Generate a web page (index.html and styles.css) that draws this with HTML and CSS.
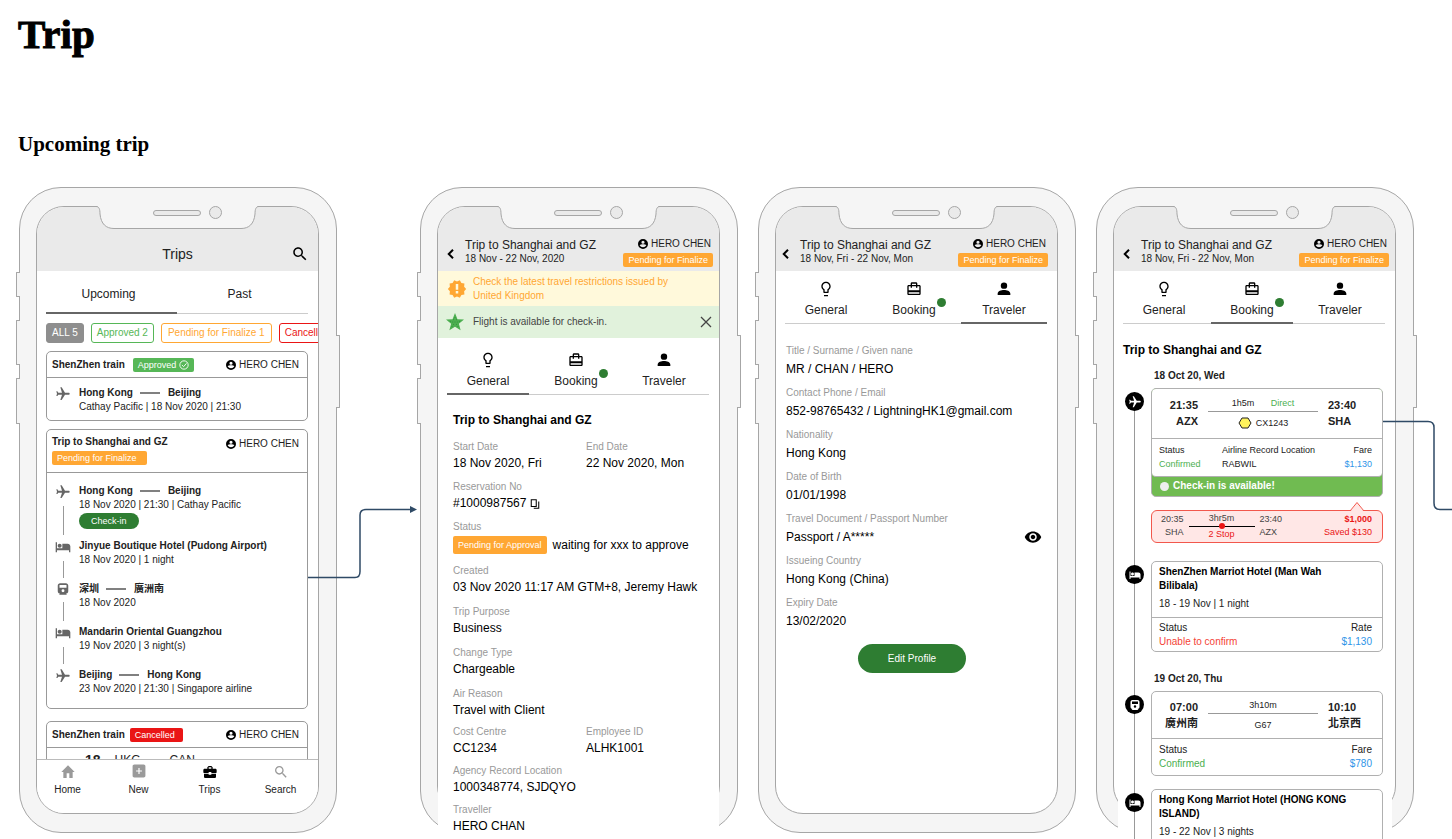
FILE: index.html
```html
<!DOCTYPE html>
<html lang="en">
<head>
<meta charset="utf-8">
<title>Trip – Upcoming trip</title>
<link rel="stylesheet" href="styles.css">
</head>
<body>
<svg class="sprite" aria-hidden="true">
  <symbol id="i-plane" viewBox="0 0 24 24"><path transform="rotate(90 12 12)" d="M21 16v-2l-8-5V3.500c0-.83-.67-1.500-1.500-1.500S10 2.670 10 3.500V9l-8 5v2l8-2.500V19l-2 1.500V22l3.500-1 3.500 1v-1.500L13 19v-5.500l8 2.500z"/></symbol>
  <symbol id="i-bed" viewBox="0 0 24 24"><path d="M7 13c1.660 0 3-1.340 3-3S8.660 7 7 7s-3 1.340-3 3 1.340 3 3 3zm12-6h-8v7H3V5H1v15h2v-3h18v3h2v-9c0-2.210-1.790-4-4-4z"/></symbol>
  <symbol id="i-train" viewBox="0 0 24 24"><path fill-rule="evenodd" d="M7 2h10c2.200 0 4 1.800 4 4v10c0 2.200-1.800 4-4 4l1.500 1.500V22h-13v-.5L7 20c-2.200 0-4-1.800-4-4V6c0-2.200 1.800-4 4-4zM6 5v5h12V5zm6 7.500a2.500 2.500 0 1 0 0 5 2.500 2.500 0 0 0 0-5z"/></symbol>
  <symbol id="i-search" viewBox="0 0 24 24"><path d="M15.500 14h-.79l-.28-.27C15.410 12.590 16 11.110 16 9.500 16 5.910 13.090 3 9.500 3S3 5.910 3 9.500 5.910 16 9.500 16c1.610 0 3.090-.59 4.230-1.570l.27.28v.79l5 4.990L20.490 19l-4.990-5zm-6 0C7.010 14 5 11.990 5 9.500S7.010 5 9.500 5 14 7.010 14 9.500 11.990 14 9.500 14z"/></symbol>
  <symbol id="i-home" viewBox="0 0 24 24"><path d="M10 21v-7h4v7h5v-9h3L12 2 2 12h3v9z"/></symbol>
  <symbol id="i-add" viewBox="0 0 24 24"><path d="M20 1H4C2.300 1 1 2.300 1 4v16c0 1.700 1.300 3 3 3h16c1.700 0 3-1.300 3-3V4c0-1.700-1.300-3-3-3zm-3 12h-4v4h-2v-4H7v-2h4V7h2v4h4v2z"/></symbol>
  <symbol id="i-case" viewBox="0 0 24 24"><path d="M10 16v-1H3.010L3 19c0 1.110.89 2 2 2h14c1.110 0 2-.89 2-2v-4h-7v1h-4zm10-9h-4.010V5l-2-2h-4l-2 2v2H4c-1.100 0-2 .9-2 2v3c0 1.110.89 2 2 2h6v-2h4v2h6c1.100 0 2-.9 2-2V9c0-1.100-.9-2-2-2zm-6 0h-4V5h4v2z"/></symbol>
  <symbol id="i-bulb" viewBox="0 0 24 24"><path d="M9 21h6v2H9zm3-20C8.140 1 5 4.140 5 8c0 2.380 1.190 4.470 3 5.740V17c0 .55.45 1 1 1h6c.55 0 1-.45 1-1v-3.260c1.810-1.270 3-3.360 3-5.740 0-3.860-3.140-7-7-7zm2.850 11.100l-.85.6V16h-4v-3.300l-.85-.6C7.800 11.160 7 9.630 7 8c0-2.760 2.240-5 5-5s5 2.240 5 5c0 1.630-.8 3.160-2.150 4.100z"/></symbol>
  <symbol id="i-luggage" viewBox="0 0 24 24"><path d="M20 6h-3V4c0-1.110-.89-2-2-2H9c-1.110 0-2 .89-2 2v2H4c-1.110 0-2 .89-2 2v11c0 1.110.89 2 2 2h16c1.110 0 2-.89 2-2V8c0-1.110-.89-2-2-2zM9 4h6v2H9V4zm11 15H4v-2h16v2zm0-5H4V8h3v2h2V8h6v2h2V8h3v6z"/></symbol>
  <symbol id="i-person" viewBox="0 0 24 24"><circle cx="12" cy="7" r="4.800"/><path d="M12 13.500c-4 0-9.500 1.700-9.500 5.200V21h19v-2.300c0-3.500-5.500-5.200-9.500-5.200z"/></symbol>
  <symbol id="i-account" viewBox="0 0 24 24"><path fill-rule="evenodd" d="M12 0a12 12 0 1 0 0 24 12 12 0 0 0 0-24zm0 4a3.800 3.800 0 1 1 0 7.600A3.800 3.800 0 0 1 12 4zM4 15c1-2 5-2.300 8-2.300s7 .3 8 2.300a9 9 0 0 1-8 5 9 9 0 0 1-8-5z"/></symbol>
  <symbol id="i-check" viewBox="0 0 24 24"><g fill="none" stroke="currentColor" stroke-width="2.200"><circle cx="12" cy="12" r="10"/><path d="M7 12l4 4 7-8"/></g></symbol>
  <symbol id="i-back" viewBox="0 0 24 24"><path fill="none" stroke="currentColor" stroke-width="4" d="M16 3.500L7.500 12l8.500 8.500"/></symbol>
  <symbol id="i-alert" viewBox="0 0 24 24"><path d="M23 12l-2.440-2.780.34-3.680-3.610-.82-1.890-3.180L12 3 8.600 1.540 6.710 4.720l-3.610.81.34 3.680L1 12l2.440 2.780-.34 3.690 3.610.82 1.890 3.180L12 21l3.400 1.460 1.890-3.180 3.610-.82-.34-3.680L23 12zm-9.500 5.500h-3v-3h3v3zm0-4.500h-3V6h3v7z"/></symbol>
  <symbol id="i-star" viewBox="0 0 24 24"><path fill="#4caf50" d="M12 0l3.300 8.300 8.700.5-6.800 5.600 2.300 8.600L12 18.200 4.500 23l2.300-8.600L0 8.800l8.700-.5z"/><g fill="#1f7a2c"><circle cx="12" cy="6" r=".6"/><circle cx="10" cy="9" r=".6"/><circle cx="14" cy="9" r=".6"/><circle cx="6" cy="11" r=".6"/><circle cx="9" cy="12" r=".6"/><circle cx="12" cy="12" r=".6"/><circle cx="15" cy="12" r=".6"/><circle cx="18" cy="11" r=".6"/><circle cx="10" cy="15" r=".6"/><circle cx="14" cy="15" r=".6"/><circle cx="8" cy="18" r=".6"/><circle cx="16" cy="18" r=".6"/></g></symbol>
  <symbol id="i-close" viewBox="0 0 24 24"><path fill="none" stroke="currentColor" stroke-width="2.500" d="M2 2l20 20M22 2L2 22"/></symbol>
  <symbol id="i-copy" viewBox="0 0 24 24"><path fill="none" stroke="currentColor" stroke-width="2.500" d="M3 2h12v16H3zM21 6v16H9"/></symbol>
  <symbol id="i-eye" viewBox="0 0 24 24"><path d="M12 4.500C7 4.500 2.730 7.610 1 12c1.730 4.390 6 7.500 11 7.500s9.270-3.110 11-7.500c-1.730-4.390-6-7.500-11-7.500zM12 17c-2.760 0-5-2.240-5-5s2.240-5 5-5 5 2.240 5 5-2.240 5-5 5zm0-8c-1.660 0-3 1.340-3 3s1.340 3 3 3 3-1.340 3-3-1.340-3-3-3z"/></symbol>
  <symbol id="i-arrow" viewBox="0 0 21 4"><path d="M0 1.500h20v1H0z"/></symbol>
  <symbol id="i-notch" viewBox="0 0 163 24">
    <path fill="#f5f5f5" d="M0 0C3 .5 4 3 4 8c1 10 6 14.500 14 14.500h127c8 0 13-4.500 14-14.500 0-5 1-7.500 4-8z"/>
    <g fill="none" stroke="#a6a6a6"><path d="M0 .5C3 .5 4 3 4 8c1 10 6 14.500 14 14.500h127c8 0 13-4.500 14-14.500 0-5 1-7.500 4-7.500"/><rect x="57.500" y="4.500" width="47" height="5" rx="2.500" fill="#eaeaea"/><circle cx="119.500" cy="6.500" r="6" fill="#eaeaea"/></g>
  </symbol>
</svg>

<main class="board">
  <h1 class="board-title">Trip</h1>
  <h2 class="board-subtitle">Upcoming trip</h2>

  <div class="phones">

    <section class="phone" aria-label="Trips list">
      <i class="key key-a"></i><i class="key key-b"></i><i class="key key-c"></i><i class="key key-d"></i>
      <div class="screen screen-clip">
        <header class="bar bar-list">
          <h3 class="bar-title">Trips</h3>
          <button class="bar-search" type="button" aria-label="Search"><svg class="ic18"><use href="#i-search"/></svg></button>
        </header>
        <div class="segments">
          <button class="segment is-active" type="button">Upcoming</button>
          <button class="segment" type="button">Past</button>
        </div>
        <div class="chips">
          <button class="chip chip-all" type="button">ALL 5</button>
          <button class="chip chip-green" type="button">Approved 2</button>
          <button class="chip chip-orange" type="button">Pending for Finalize 1</button>
          <button class="chip chip-red" type="button">Cancelled 1</button>
        </div>
        <div class="trip-list">
          <article class="card">
            <div class="card-head">
              <div class="card-name"><strong>ShenZhen train</strong><span class="badge badge-green">Approved <svg class="ic10"><use href="#i-check"/></svg></span></div>
              <span class="owner"><svg class="ic10"><use href="#i-account"/></svg>HERO CHEN</span>
            </div>
            <div class="stops stops-short">
              <div class="stop">
                <div class="marker"><svg class="ic16"><use href="#i-plane"/></svg></div>
                <div class="stop-body"><strong class="route">Hong Kong<svg class="arrow"><use href="#i-arrow"/></svg>Beijing</strong><span>Cathay Pacific | 18 Nov 2020 | 21:30</span></div>
              </div>
            </div>
          </article>

          <article class="card">
            <div class="card-head card-head-tall">
              <div class="card-name card-name-stack"><strong>Trip to Shanghai and GZ</strong><span class="badge badge-orange badge-loose">Pending for Finalize</span></div>
              <span class="owner"><svg class="ic10"><use href="#i-account"/></svg>HERO CHEN</span>
            </div>
            <div class="stops">
              <div class="stop">
                <div class="marker"><svg class="ic16"><use href="#i-plane"/></svg><i class="link"></i></div>
                <div class="stop-body"><strong class="route">Hong Kong<svg class="arrow"><use href="#i-arrow"/></svg>Beijing</strong><span>18 Nov 2020 | 21:30 | Cathay Pacific</span><button class="checkin" type="button">Check-in</button></div>
              </div>
              <div class="stop">
                <div class="marker"><svg class="ic16"><use href="#i-bed"/></svg><i class="link"></i></div>
                <div class="stop-body"><strong>Jinyue Boutique Hotel (Pudong Airport)</strong><span>18 Nov 2020 | 1 night</span></div>
              </div>
              <div class="stop">
                <div class="marker"><svg class="ic14"><use href="#i-train"/></svg><i class="link"></i></div>
                <div class="stop-body"><strong class="route" lang="zh-Hant">深圳<svg class="arrow"><use href="#i-arrow"/></svg>廣洲南</strong><span>18 Nov 2020</span></div>
              </div>
              <div class="stop">
                <div class="marker"><svg class="ic16"><use href="#i-bed"/></svg><i class="link"></i></div>
                <div class="stop-body"><strong>Mandarin Oriental Guangzhou</strong><span>19 Nov 2020 | 3 night(s)</span></div>
              </div>
              <div class="stop">
                <div class="marker"><svg class="ic16"><use href="#i-plane"/></svg></div>
                <div class="stop-body"><strong class="route">Beijing<svg class="arrow"><use href="#i-arrow"/></svg>Hong Kong</strong><span>23 Nov 2020 | 21:30 | Singapore airline</span></div>
              </div>
            </div>
          </article>

          <article class="card card-next">
            <div class="card-head">
              <div class="card-name card-name-tight"><strong>ShenZhen train</strong><span class="badge badge-red">Cancelled</span></div>
              <span class="owner"><svg class="ic10"><use href="#i-account"/></svg>HERO CHEN</span>
            </div>
            <div class="peek"><strong>18</strong><span>HKG</span><span>CAN</span></div>
          </article>
        </div>
        <nav class="dock">
          <a href="#home"><svg class="ic16"><use href="#i-home"/></svg>Home</a>
          <a href="#new"><svg class="ic14"><use href="#i-add"/></svg>New</a>
          <a class="is-current" href="#trips"><svg class="ic16"><use href="#i-case"/></svg>Trips</a>
          <a href="#search"><svg class="ic16"><use href="#i-search"/></svg>Search</a>
        </nav>
      </div>
      <svg class="notch"><use href="#i-notch"/></svg>
      <svg class="connector connector-detail" viewBox="0 0 109 78"><path class="wire" d="M0 72.500h47q5 0 5-6V10q0-5.500 6-5.500h46"/><path class="tip" d="M102 1l7 3.500-7 3.500z"/></svg>
    </section>

    <section class="phone phone-detail" aria-label="General">
      <i class="key key-a"></i><i class="key key-b"></i><i class="key key-c"></i><i class="key key-d"></i>
      <div class="screen">
        <header class="bar">
          <button class="back" type="button" aria-label="Back"><svg class="ic12"><use href="#i-back"/></svg></button>
          <div class="bar-trip"><h3>Trip to Shanghai and GZ</h3><p>18 Nov - 22 Nov, 2020</p></div>
          <div class="bar-side"><span class="owner"><svg class="ic10"><use href="#i-account"/></svg>HERO CHEN</span><span class="badge badge-orange">Pending for Finalize</span></div>
        </header>
        <div class="content">
          <p class="notice notice-warn"><svg class="ic20"><use href="#i-alert"/></svg><span>Check the latest travel restrictions issued by United Kingdom</span></p>
          <div class="notice notice-ok"><svg class="ic18"><use href="#i-star"/></svg><span>Flight is available for check-in.</span><button class="plain" type="button" aria-label="Dismiss"><svg class="ic12"><use href="#i-close"/></svg></button></div>
          <div class="tabs tabs-after-notice">
            <button class="tab is-active" type="button"><svg class="ic16"><use href="#i-bulb"/></svg>General</button>
            <button class="tab" type="button"><svg class="ic16"><use href="#i-luggage"/></svg><span class="dotted">Booking</span></button>
            <button class="tab" type="button"><svg class="ic16"><use href="#i-person"/></svg>Traveler</button>
          </div>
          <div class="general">
            <h4>Trip to Shanghai and GZ</h4>
            <dl class="fields">
              <div class="pair">
                <div><dt>Start Date</dt><dd>18 Nov 2020, Fri</dd></div>
                <div><dt>End Date</dt><dd>22 Nov 2020, Mon</dd></div>
              </div>
              <div><dt>Reservation No</dt><dd>#1000987567 <button class="plain" type="button" aria-label="Copy"><svg class="ic10"><use href="#i-copy"/></svg></button></dd></div>
              <div><dt>Status</dt><dd class="approval"><span class="badge badge-orange badge-big">Pending for Approval</span>waiting for xxx to approve</dd></div>
            </dl>
            <dl class="fields fields-airy">
              <div><dt>Created</dt><dd>03 Nov 2020 11:17 AM GTM+8, Jeremy Hawk</dd></div>
              <div><dt>Trip Purpose</dt><dd>Business</dd></div>
              <div><dt>Change Type</dt><dd>Chargeable</dd></div>
              <div><dt>Air Reason</dt><dd>Travel with Client</dd></div>
            </dl>
            <dl class="fields fields-dense">
              <div class="pair">
                <div><dt>Cost Centre</dt><dd>CC1234</dd></div>
                <div><dt>Employee ID</dt><dd>ALHK1001</dd></div>
              </div>
              <div><dt>Agency Record Location</dt><dd>1000348774, SJDQYO</dd></div>
              <div><dt>Traveller</dt><dd>HERO CHAN</dd></div>
            </dl>
          </div>
        </div>
      </div>
      <svg class="notch"><use href="#i-notch"/></svg>
    </section>

    <section class="phone" aria-label="Traveler">
      <i class="key key-a"></i><i class="key key-b"></i><i class="key key-c"></i><i class="key key-d"></i>
      <div class="screen">
        <header class="bar bar-inset">
          <button class="back" type="button" aria-label="Back"><svg class="ic12"><use href="#i-back"/></svg></button>
          <div class="bar-trip"><h3>Trip to Shanghai and GZ</h3><p>18 Nov, Fri - 22 Nov, Mon</p></div>
          <div class="bar-side"><span class="owner"><svg class="ic10"><use href="#i-account"/></svg>HERO CHEN</span><span class="badge badge-orange">Pending for Finalize</span></div>
        </header>
        <div class="tabs tabs-end">
          <button class="tab" type="button"><svg class="ic16"><use href="#i-bulb"/></svg>General</button>
          <button class="tab" type="button"><svg class="ic16"><use href="#i-luggage"/></svg><span class="dotted">Booking</span></button>
          <button class="tab is-active" type="button"><svg class="ic16"><use href="#i-person"/></svg>Traveler</button>
        </div>
        <div class="profile">
          <dl class="fields fields-profile">
            <div><dt>Title / Surname / Given nane</dt><dd>MR / CHAN / HERO</dd></div>
            <div><dt>Contact Phone / Email</dt><dd>852-98765432 / LightningHK1@gmail.com</dd></div>
            <div><dt>Nationality</dt><dd>Hong Kong</dd></div>
            <div><dt>Date of Birth</dt><dd>01/01/1998</dd></div>
            <div><dt>Travel Document / Passport Number</dt><dd class="secret">Passport / A*****<button class="plain" type="button" aria-label="Show passport number"><svg class="ic18"><use href="#i-eye"/></svg></button></dd></div>
            <div><dt>Issueing Country</dt><dd>Hong Kong (China)</dd></div>
            <div><dt>Expiry Date</dt><dd>13/02/2020</dd></div>
          </dl>
          <div class="actions"><button class="edit" type="button">Edit Profile</button></div>
        </div>
      </div>
      <svg class="notch"><use href="#i-notch"/></svg>
    </section>

    <section class="phone" aria-label="Booking">
      <i class="key key-a"></i><i class="key key-b"></i><i class="key key-c"></i><i class="key key-d"></i>
      <div class="screen">
        <header class="bar">
          <button class="back" type="button" aria-label="Back"><svg class="ic12"><use href="#i-back"/></svg></button>
          <div class="bar-trip"><h3>Trip to Shanghai and GZ</h3><p>18 Nov, Fri - 22 Nov, Mon</p></div>
          <div class="bar-side"><span class="owner"><svg class="ic10"><use href="#i-account"/></svg>HERO CHEN</span><span class="badge badge-orange">Pending for Finalize</span></div>
        </header>
        <div class="tabs">
          <button class="tab" type="button"><svg class="ic16"><use href="#i-bulb"/></svg>General</button>
          <button class="tab is-active" type="button"><svg class="ic16"><use href="#i-luggage"/></svg><span class="dotted">Booking</span></button>
          <button class="tab" type="button"><svg class="ic16"><use href="#i-person"/></svg>Traveler</button>
        </div>
        <div class="booking">
          <h4>Trip to Shanghai and GZ</h4>
          <div class="timeline">
            <h5>18 Oct 20, Wed</h5>
            <div class="entry">
              <span class="node"><svg class="ic14"><use href="#i-plane"/></svg></span>
              <div class="entry-body">
                <article class="ticket ticket-open">
                  <div class="ticket-inner">
                    <div class="leg leg-air">
                      <div class="leg-from"><b>21:35</b><b>AZX</b></div>
                      <div class="leg-mid"><span class="leg-top">1h5m <em>Direct</em></span><span class="leg-code"><svg class="hex" viewBox="0 0 14 12"><path d="M4 1h6l3 5-3 5H4L1 6z"/></svg>CX1243</span></div>
                      <div class="leg-to"><b>23:40</b><b>SHA</b></div>
                    </div>
                    <div class="facts facts-air">
                      <div>Status<span class="ok">Confirmed</span></div>
                      <div>Airline Record Location<span>RABWIL</span></div>
                      <div class="fact-end">Fare<span class="price">$1,130</span></div>
                    </div>
                  </div>
                  <p class="ready"><i></i>Check-in is available!</p>
                </article>
                <aside class="offer">
                  <svg class="offer-tip" viewBox="0 0 16 11"><path class="tip-fill" d="M1 11l7-9.500 7 9.500z"/><path class="tip-line" d="M1 10l7-8.500 7 8.500"/></svg>
                  <div class="offer-from"><span>20:35</span><span>SHA</span></div>
                  <div class="offer-mid"><span>3hr5m</span><i class="stopline"></i><span class="bad">2 Stop</span></div>
                  <div class="offer-to"><span>23:40</span><span>AZX</span></div>
                  <div class="offer-price"><b>$1,000</b><span>Saved $130</span></div>
                </aside>
              </div>
            </div>
            <div class="entry">
              <span class="node"><svg class="ic12"><use href="#i-bed"/></svg></span>
              <article class="ticket">
                <div class="stay"><b>ShenZhen Marriot Hotel (Man Wah Bilibala)</b><span>18 - 19 Nov | 1 night</span></div>
                <div class="facts facts-stay"><div>Status<span class="fail">Unable to confirm</span></div><div class="fact-end">Rate<span class="price">$1,130</span></div></div>
              </article>
            </div>
            <h5>19 Oct 20, Thu</h5>
            <div class="entry">
              <span class="node"><svg class="ic12"><use href="#i-train"/></svg></span>
              <article class="ticket">
                <div class="leg">
                  <div class="leg-from"><b>07:00</b><b lang="zh-Hant">廣州南</b></div>
                  <div class="leg-mid"><span class="leg-top">3h10m</span><span class="leg-code">G67</span></div>
                  <div class="leg-to"><b>10:10</b><b lang="zh-Hant">北京西</b></div>
                </div>
                <div class="facts"><div>Status<span class="ok">Confirmed</span></div><div class="fact-end">Fare<span class="price">$780</span></div></div>
              </article>
            </div>
            <div class="entry">
              <span class="node"><svg class="ic12"><use href="#i-bed"/></svg></span>
              <article class="ticket">
                <div class="stay"><b>Hong Kong Marriot Hotel (HONG KONG ISLAND)</b><span>19 - 22 Nov | 3 nights</span></div>
                <div class="facts facts-stay"><div>Status<span class="ok">Confirmed</span></div><div class="fact-end">Rate<span class="price">$1,130</span></div></div>
              </article>
            </div>
          </div>
        </div>
      </div>
      <svg class="notch"><use href="#i-notch"/></svg>
      <svg class="connector connector-next" viewBox="0 0 69 98"><path class="wire" d="M0 4.500h45q6 0 6 6V86q0 6.500 6 6.500h12"/></svg>
    </section>
  </div>
</main>
</body>
</html>
```
FILE: styles.css
```css
:root {
  --line: #a6a6a6;
  --bezel: #f5f5f5;
  --orange: #ffa733;
  --green: #56b757;
  --forest: #2e7d32;
  --red: #ea1515;
  --ink: #222;
  --phone-height: 646px;
}

* { box-sizing: border-box; }

body {
  margin: 0;
  background: #fff;
  color: var(--ink);
  font-family: "Liberation Sans", "Noto Sans CJK TC", Arial, sans-serif;
  font-size: 10px;
  line-height: 14px;
}

h1, h2, h3, h4, h5, p, dl, dd { margin: 0; }

button {
  margin: 0;
  padding: 0;
  border: 0;
  background: none;
  color: inherit;
  font: inherit;
  cursor: pointer;
}

svg { display: block; flex: none; fill: currentColor; }
.sprite { position: absolute; width: 0; height: 0; }
.ic10 { width: 10px; height: 10px; }
.ic12 { width: 12px; height: 12px; }
.ic14 { width: 14px; height: 14px; }
.ic16 { width: 16px; height: 16px; }
.ic18 { width: 18px; height: 18px; }
.ic20 { width: 20px; height: 20px; }

/* Board */
.board {
  height: 100vh;
  padding: 10px 38px 0 18px;
  overflow: hidden;
}

.board-title, .board-subtitle {
  color: #000;
  font-family: "Liberation Serif", serif;
  font-weight: 700;
}

.board-title { font-size: 41px; line-height: 48px; -webkit-text-stroke: 1px #000; }
.board-subtitle { margin-top: 74px; font-size: 21px; line-height: 24px; }

.phones {
  display: flex;
  gap: 20px;
  align-items: flex-start;
  margin: 31px 0 0 1px;
}

/* Device frame */
.phone {
  position: relative;
  flex: 1 0 300px;
  height: var(--phone-height);
  padding: 18px 17px 18px 16px;
  border: 1px solid var(--line);
  border-radius: 42px;
  background: var(--bezel);
}

.phone-detail { margin-left: 63px; }

.screen {
  display: flex;
  flex-direction: column;
  height: 100%;
  border: 1px solid var(--line);
  border-radius: 28px;
  background: #fff;
}

.screen-clip { overflow: hidden; }

.notch {
  position: absolute;
  top: 18px;
  left: 50%;
  width: 163px;
  height: 24px;
  margin-left: -82px;
}

.key {
  position: absolute;
  left: -4px;
  width: 4px;
  border: 1px solid var(--line);
  border-right: 0;
  border-radius: 1px 0 0 1px;
  background: var(--bezel);
}

.key-a { top: 84px; height: 25px; }
.key-b { top: 132px; height: 45px; }
.key-c { top: 190px; height: 46px; }
.key-d { top: 147px; right: -4px; left: auto; height: 73px; border: 1px solid var(--line); border-left: 0; border-radius: 0 1px 1px 0; }

.connector { position: absolute; }
.connector-detail { top: 317px; right: -81px; width: 109px; height: 78px; }
.connector-next { top: 229px; right: -39px; width: 69px; height: 98px; }
.wire { fill: none; stroke: #2f4a66; stroke-width: 1.5; }
.tip { fill: #2f4a66; }

/* Screen header */
.bar {
  display: flex;
  flex: none;
  align-items: flex-end;
  height: 64px;
  padding: 0 6px 4px 7px;
  border-radius: 27px 27px 0 0;
  background: #eaeaea;
}

.bar-inset { padding: 0 9px 4px 4px; }

.bar-list {
  display: grid;
  grid-template-columns: 24px 1fr 24px;
  padding: 0 6px 8px;
  align-items: end;
}

.bar-title { grid-column: 2; font-size: 14px; font-weight: 400; line-height: 18px; text-align: center; }
.bar-search { color: #000; }
.bar-search svg { margin: 0 auto; }

.back { width: 12px; margin-right: 8px; padding-bottom: 7px; color: #000; }
.bar-trip { flex: 1; padding-bottom: 1px; }
.bar-trip h3 { font-size: 12px; font-weight: 400; line-height: 14px; }
.bar-side { display: flex; flex-direction: column; align-items: flex-end; gap: 2px; }
.bar-side .owner { padding-right: 2px; }

.owner { display: flex; align-items: center; gap: 3px; }
.owner svg { color: #000; }

.badge {
  display: inline-flex;
  align-items: center;
  gap: 3px;
  padding: 0 5px;
  border-radius: 2px;
  color: #fff;
  font-size: 9px;
  line-height: 14px;
}

.badge-green { background: var(--green); }
.badge-orange { background: var(--orange); }
.badge-red { padding-right: 8px; background: var(--red); }
.badge-loose { padding-right: 10px; }
.badge-big { line-height: 18px; }

/* Trips list */
.segments { display: flex; flex: none; margin: 0 10px 0 9px; }

.segment {
  flex: 1;
  height: 43px;
  padding: 4px 6px 0 0;
  border-bottom: 1px solid #ccc;
  font-size: 12px;
}

.segment.is-active { border-bottom: 2px solid #666; }

.chips { display: flex; flex: none; gap: 7px; margin: 9px 0 8px 9px; overflow: hidden; }

.chip {
  flex: none;
  height: 20px;
  padding: 0 5px;
  border: 1px solid currentColor;
  border-radius: 3px;
  font-size: 10px;
}

.chip-all { border-color: #8e8e8e; background: #8e8e8e; color: #fff; }
.chip-green { color: var(--green); }
.chip-orange { padding: 0 6px; color: var(--orange); }
.chip-red { color: var(--red); }

.trip-list {
  display: flex;
  flex: 1;
  flex-direction: column;
  gap: 8px;
  min-height: 0;
  padding: 0 10px 0 9px;
  overflow: hidden;
}

.card { flex: none; border: 1px solid #999; border-radius: 5px; }
.card-next { margin-top: 4px; }

.card-head {
  display: flex;
  align-items: center;
  justify-content: space-between;
  min-height: 26px;
  padding: 0 8px 0 5px;
  border-bottom: 1px solid #999;
}

.card-head-tall { align-items: flex-start; min-height: 43px; padding-top: 5px; }
.card-head-tall .owner { padding-top: 2px; }
.card-name { display: flex; align-items: center; gap: 8px; }
.card-name-tight { gap: 5px; }
.card-name-stack { flex-direction: column; align-items: flex-start; gap: 2px; }

.stops { padding: 11px 8px 12px; }
.stops-short { padding: 8px 8px 6px; }
.stop { display: flex; gap: 8px; }
.marker { display: flex; flex-direction: column; align-items: center; width: 16px; color: #666; }
.link { flex: 1; width: 1px; margin: 6px 0 4px; background: #999; }
.stop-body { display: flex; flex-direction: column; align-items: flex-start; padding-bottom: 15px; }
.stop:last-child .stop-body { padding-bottom: 0; }
.route { display: flex; align-items: center; gap: 7px; }
.arrow { width: 21px; height: 4px; color: #000; }

.checkin {
  margin-top: 1px;
  padding: 0 12px;
  border-radius: 8px;
  background: var(--forest);
  color: #fff;
  font-size: 9px;
  line-height: 16px;
}

.stop-body:has(.checkin) { padding-bottom: 10px; }

.peek { display: flex; gap: 14px; padding: 5px 38px; font-size: 12px; }
.peek strong { font-size: 14px; }
.peek span + span { margin-left: 15px; }

.dock {
  display: flex;
  flex: none;
  justify-content: space-between;
  height: 54px;
  padding: 4px 21px 0 14px;
  border-top: 1px solid #bbb;
  background: #fff;
}

.dock a {
  display: flex;
  flex-direction: column;
  align-items: center;
  justify-content: space-between;
  width: 33px;
  height: 33px;
  color: var(--ink);
  text-decoration: none;
}

.dock svg { color: #9a9a9a; }
.dock .is-current svg { color: #000; }

/* Tabs */
.tabs {
  display: grid;
  flex: none;
  grid-template-columns: repeat(3, 1fr);
  column-gap: 6px;
  margin: 0 10px 0 9px;
  padding: 10px 4px 0 0;
  border-bottom: 1px solid #ccc;
}

.tabs-end { grid-template-columns: 82fr 82fr 86fr; padding-right: 0; }
.tabs-after-notice { padding-top: 14px; }

.tab {
  display: flex;
  flex-direction: column;
  align-items: center;
  gap: 6px;
  margin-bottom: -1px;
  padding-bottom: 5px;
  border-bottom: 2px solid transparent;
  font-size: 12px;
}

.tab svg { color: #000; }
.tab.is-active { border-bottom-color: #666; }
.dotted { position: relative; }

.dotted::after {
  position: absolute;
  top: -5px;
  right: -10px;
  width: 9px;
  height: 9px;
  border-radius: 50%;
  background: var(--forest);
  content: "";
}

/* General */
.content { background: #fff; }
.notice { display: flex; align-items: center; gap: 6px; padding: 0 7px 0 9px; }
.notice span { flex: 1; }
.notice-warn { min-height: 35px; padding-right: 30px; background: #fff9db; color: var(--orange); }
.notice-ok { gap: 9px; min-height: 32px; padding-left: 8px; background: #e1f2dc; color: #444; }
.plain { display: inline-block; vertical-align: middle; }

.general { padding: 17px 0 40px 15px; }
h4 { color: #000; font-size: 12px; line-height: 16px; }

.fields { display: flex; flex-direction: column; gap: 8px; margin-top: 12px; }
.fields-airy { gap: 9px; margin-top: 8px; }
.fields-dense { gap: 7px; margin-top: 6px; }
.pair { display: grid; grid-template-columns: 1fr 1fr; }
dt { color: #999; }
dd { color: #000; font-size: 12px; line-height: 18px; }
.approval { display: flex; align-items: center; gap: 6px; line-height: 22px; }

/* Traveler */
.profile { padding: 20px 10px 0; }
.fields-profile { gap: 6px; margin: 0; }
.fields-profile dd { line-height: 22px; }
.secret { display: flex; align-items: center; justify-content: space-between; padding-right: 5px; }
.actions { display: flex; justify-content: center; padding: 12px 9px 0 0; }

.edit {
  padding: 0 30px;
  border-radius: 15px;
  background: var(--forest);
  color: #fff;
  line-height: 29px;
}

/* Booking */
.booking { margin: 0 3px 0 4px; padding: 18px 9px 0 5px; background: #fff; }
.timeline { position: relative; }

.timeline::before {
  position: absolute;
  top: 40px;
  bottom: 0;
  left: 11px;
  width: 1px;
  background: #999;
  content: "";
}

h5 { margin: 11px 0 5px 31px; font-size: 10px; line-height: 14px; }
.entry { display: grid; grid-template-columns: 19px 1fr; column-gap: 7px; margin: 0 0 13px 2px; align-items: start; }
.entry + h5 { margin-top: 20px; }

.node {
  position: relative;
  display: grid;
  place-items: center;
  height: 19px;
  margin-top: 4px;
  border-radius: 50%;
  background: #000;
  color: #fff;
}

.ticket { border: 1px solid #b0b0b0; border-radius: 5px; background: #fff; }
.ticket-open { background: #70bb51; }
.ticket-inner { border-bottom: 1px solid #b0b0b0; border-radius: 4px; background: #fff; }

.leg {
  display: grid;
  grid-template-columns: 46px 1fr 54px;
  column-gap: 10px;
  padding: 7px 0 6px;
  border-bottom: 1px solid #b0b0b0;
  font-size: 9px;
}

.leg-air { padding: 8px 0; }
.leg b { font-size: 11px; line-height: 16px; }
.leg-from, .leg-to { display: flex; flex-direction: column; }
.leg-from { align-items: flex-end; }
.leg-mid { display: flex; flex-direction: column; text-align: center; }
.leg-top { padding-bottom: 2px; border-bottom: 1px solid #999; line-height: 12px; }
.leg-top em { margin-left: 14px; color: #4caf50; font-style: normal; }
.leg-code { display: flex; align-items: center; justify-content: center; gap: 4px; padding-top: 4px; }
.hex { width: 14px; height: 12px; fill: #fff35c; stroke: #222; }

.facts { display: flex; justify-content: space-between; padding: 4px 10px 4px 7px; }
.facts span { display: block; }
.facts-air { padding-bottom: 5px; font-size: 9px; }
.facts-air div:nth-child(2) { margin-right: 8px; }
.facts-stay { padding-top: 3px; padding-bottom: 2px; }
.fact-end { text-align: right; }
.ok { color: #4caf50; }
.fail { color: #f44336; }
.bad { color: var(--red); }
.price { color: #2f95e8; }

.ready { display: flex; align-items: center; gap: 4px; padding: 2px 8px 3px; color: #fff; font-weight: 700; }
.ready i { width: 9px; height: 9px; border-radius: 50%; background: #eee; }

.offer {
  position: relative;
  display: grid;
  grid-template-columns: auto 66px 1fr auto;
  column-gap: 5px;
  margin: 13px 0 5px;
  padding: 2px 10px 3px 9px;
  border: 1px solid #f2574c;
  border-radius: 6px;
  background: #ffe7e6;
  color: #444;
  font-size: 9px;
  line-height: 13px;
}

.offer > div { display: flex; flex-direction: column; }
.offer-tip { position: absolute; top: -10px; right: 17px; width: 16px; height: 11px; }
.tip-fill { fill: #ffe7e6; }
.tip-line { fill: none; stroke: #f2574c; }
.offer-from, .offer-price { align-items: flex-end; }
.offer-price, .offer-price b { color: var(--red); }
.offer .offer-mid { align-items: center; line-height: 10px; }

.stopline {
  display: grid;
  place-items: center;
  width: 100%;
  height: 6px;
  background: linear-gradient(#000, #000) center / 100% 1px no-repeat;
}

.stopline::before { width: 6px; height: 6px; border-radius: 50%; background: var(--red); content: ""; }

.stay { display: flex; flex-direction: column; gap: 4px; padding: 3px 26px 6px 7px; border-bottom: 1px solid #b0b0b0; }
.stay b { color: #000; }
```
